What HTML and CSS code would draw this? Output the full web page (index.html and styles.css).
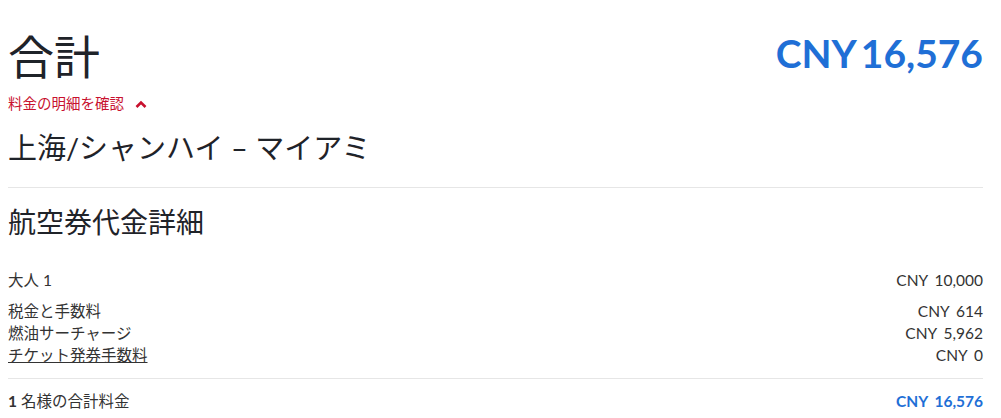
FILE: index.html
```html
<!DOCTYPE html>
<html lang="ja">
<head>
  <meta charset="UTF-8" />
  <title>合計</title>
  <link rel="stylesheet" href="styles.css">
</head>
<body>

<div class="summary">
  <div class="total-head">
    <h1>合計</h1>
    <div class="grand">CNY 16,576</div>
  </div>
  <a class="toggle" href="#">料金の明細を確認
    <svg width="12" height="8" viewBox="0 0 12 8"><path d="M1.5 7 L6 2.5 L10.5 7" fill="none" stroke="#c8102e" stroke-width="2.6"/></svg>
  </a>

  <h2 class="route">上海/シャンハイ – マイアミ</h2>

  <h2 class="section">航空券代金詳細</h2>

  <div class="row first"><span>大人 1</span><span class="amount">CNY 10,000</span></div>
  <div class="group">
    <div class="row"><span>税金と手数料</span><span class="amount">CNY 614</span></div>
    <div class="row"><span>燃油サーチャージ</span><span class="amount">CNY 5,962</span></div>
    <div class="row"><a href="#">チケット発券手数料</a><span class="amount">CNY 0</span></div>
  </div>

  <div class="row total"><span><b>1</b> 名様の合計料金</span><span class="amount">CNY 16,576</span></div>
</div>

</body>
</html>
```

FILE: styles.css
```css
body {
  margin: 0;
  font-family: Lato, "Noto Sans CJK JP", sans-serif;
  color: #333;
  background: #fff;
}
.summary {
  padding: 0 18px 0 8px;
}
.total-head {
  display: flex;
  justify-content: space-between;
  align-items: center;
  padding-top: 28px;
  height: 58px;
}
.total-head h1 {
  margin: 0;
  font-size: 46px;
  font-weight: 400;
  color: #1f2329;
  line-height: 58px;
}
.grand {
  font-size: 39px;
  font-weight: 700;
  color: #1f6fd6;
  word-spacing: -4px;
  margin-top: -8px;
}
.toggle {
  display: inline-flex;
  align-items: center;
  gap: 11px;
  margin-top: 9px;
  font-size: 14.5px;
  color: #c8102e;
  text-decoration: none;
  line-height: 18px;
}
.route {
  margin: 0;
  padding: 17px 0 21px;
  font-size: 29px;
  font-weight: 400;
  color: #1f2329;
  line-height: 36px;
  border-bottom: 1px solid #e6e6e6;
}
.section {
  margin: 0;
  padding: 16px 0 0;
  font-size: 28px;
  font-weight: 400;
  color: #1f2329;
  line-height: 36px;
}
.row {
  display: flex;
  justify-content: space-between;
  font-size: 15.5px;
  line-height: 22px;
}
.amount {
  word-spacing: 3px;
}
.row.first {
  margin-top: 29px;
}
.group {
  margin-top: 9px;
  padding-bottom: 12px;
  border-bottom: 1px solid #e6e6e6;
}
.row a {
  color: #333;
  text-decoration: underline;
}
.row.total {
  margin-top: 11px;
}
.row.total .amount {
  color: #1f6fd6;
  font-weight: 700;
}
```
